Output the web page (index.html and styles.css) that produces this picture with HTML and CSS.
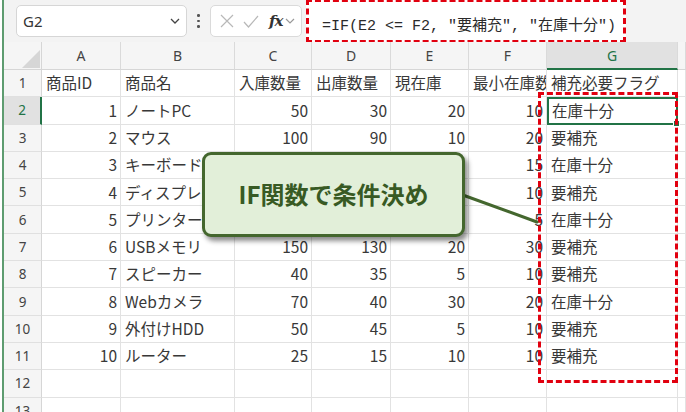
FILE: index.html
```html
<!DOCTYPE html>
<html lang="ja">
<head>
<meta charset="utf-8">
<title>在庫表</title>
<link rel="stylesheet" href="styles.css">
</head>
<body>
<div class="app">
  <div class="toolbar">
    <div class="namebox">
      <span class="name">G2</span>
      <svg class="chev" width="10" height="6" viewBox="0 0 10 6"><path d="M1 1 L5 5 L9 1" fill="none" stroke="#444" stroke-width="1.3"/></svg>
    </div>
    <div class="dots"><span></span><span></span><span></span></div>
    <div class="fxbox">
      <svg width="14" height="14" viewBox="0 0 14 14"><path d="M1 1 L13 13 M13 1 L1 13" stroke="#b8b8b8" stroke-width="1.2" fill="none"/></svg>
      <svg width="16" height="13" viewBox="0 0 16 13"><path d="M1 7 L5.5 12 L15 1" stroke="#b8b8b8" stroke-width="1.2" fill="none"/></svg>
      <span class="fx">fx</span>
      <svg width="10" height="6" viewBox="0 0 10 6"><path d="M1 1 L5 5 L9 1" fill="none" stroke="#999" stroke-width="1.2"/></svg>
    </div>
    <div class="formula">=IF(E2 &lt;= F2, "要補充", "在庫十分")</div>
  </div>

  <div class="sheet">
    <div class="corner"><svg width="22" height="20" viewBox="0 0 22 20"><path d="M21 1 L21 19 L3 19 Z" fill="#d6d6d6"/></svg></div>
    <div class="ch">A</div><div class="ch">B</div><div class="ch">C</div><div class="ch">D</div><div class="ch">E</div><div class="ch">F</div><div class="ch ch-sel">G</div><div class="ch"></div>

    <div class="rh">1</div><div class="c">商品ID</div><div class="c">商品名</div><div class="c">入庫数量</div><div class="c">出庫数量</div><div class="c">現在庫</div><div class="c">最小在庫数</div><div class="c">補充必要フラグ</div><div class="c"></div>

    <div class="rh rh-sel">2</div><div class="c n">1</div><div class="c">ノートPC</div><div class="c n">50</div><div class="c n">30</div><div class="c n">20</div><div class="c n">10</div><div class="c sel">在庫十分</div><div class="c"></div>

    <div class="rh">3</div><div class="c n">2</div><div class="c">マウス</div><div class="c n">100</div><div class="c n">90</div><div class="c n">10</div><div class="c n">20</div><div class="c">要補充</div><div class="c"></div>

    <div class="rh">4</div><div class="c n">3</div><div class="c">キーボード</div><div class="c n">80</div><div class="c n">50</div><div class="c n">30</div><div class="c n">15</div><div class="c">在庫十分</div><div class="c"></div>

    <div class="rh">5</div><div class="c n">4</div><div class="c">ディスプレイ</div><div class="c n">30</div><div class="c n">25</div><div class="c n">5</div><div class="c n">10</div><div class="c">要補充</div><div class="c"></div>

    <div class="rh">6</div><div class="c n">5</div><div class="c">プリンター</div><div class="c n">20</div><div class="c n">10</div><div class="c n">10</div><div class="c n">5</div><div class="c">在庫十分</div><div class="c"></div>

    <div class="rh">7</div><div class="c n">6</div><div class="c">USBメモリ</div><div class="c n">150</div><div class="c n">130</div><div class="c n">20</div><div class="c n">30</div><div class="c">要補充</div><div class="c"></div>

    <div class="rh">8</div><div class="c n">7</div><div class="c">スピーカー</div><div class="c n">40</div><div class="c n">35</div><div class="c n">5</div><div class="c n">10</div><div class="c">要補充</div><div class="c"></div>

    <div class="rh">9</div><div class="c n">8</div><div class="c">Webカメラ</div><div class="c n">70</div><div class="c n">40</div><div class="c n">30</div><div class="c n">20</div><div class="c">在庫十分</div><div class="c"></div>

    <div class="rh">10</div><div class="c n">9</div><div class="c">外付けHDD</div><div class="c n">50</div><div class="c n">45</div><div class="c n">5</div><div class="c n">10</div><div class="c">要補充</div><div class="c"></div>

    <div class="rh">11</div><div class="c n">10</div><div class="c">ルーター</div><div class="c n">25</div><div class="c n">15</div><div class="c n">10</div><div class="c n">10</div><div class="c">要補充</div><div class="c"></div>

    <div class="rh">12</div><div class="c"></div><div class="c"></div><div class="c"></div><div class="c"></div><div class="c"></div><div class="c"></div><div class="c"></div><div class="c"></div>

    <div class="rh">13</div><div class="c"></div><div class="c"></div><div class="c"></div><div class="c"></div><div class="c"></div><div class="c"></div><div class="c"></div><div class="c"></div>
  </div>

  <div class="col-mark"></div>
  <svg class="pointer" width="686" height="412" viewBox="0 0 686 412"><line x1="460" y1="194" x2="537" y2="222" stroke="#44672e" stroke-width="3" stroke-linecap="round"/></svg>
  <div class="callout">IF関数で条件決め</div>
</div>
</body>
</html>
```

FILE: styles.css
```css
* { box-sizing: border-box; }
html, body { margin: 0; padding: 0; }
body {
  width: 686px;
  height: 412px;
  overflow: hidden;
  background: #ffffff;
  font-family: "Noto Sans CJK JP", "Noto Sans", sans-serif;
  color: #333;
}
.app {
  position: relative;
  margin-left: 2px;
  border-left: 2px solid #5e9c70;
  height: 412px;
  background: #ffffff;
}
.toolbar {
  height: 42px;
  background: #f3f3f3;
  display: flex;
  align-items: flex-start;
  padding-top: 5px;
}
.namebox {
  margin-left: 12px;
  width: 171px;
  height: 32px;
  background: #fff;
  border: 1px solid #d6d6d6;
  border-radius: 5px;
  display: flex;
  align-items: center;
  justify-content: space-between;
  padding: 0 6px 0 6px;
}
.name {
  font-family: "Noto Sans", "Open Sans", sans-serif;
  font-size: 15px;
  color: #333;
}
.dots {
  width: 23px;
  height: 32px;
  display: flex;
  flex-direction: column;
  align-items: center;
  justify-content: center;
  gap: 3px;
}
.dots span {
  width: 2.5px;
  height: 2.5px;
  background: #555;
  border-radius: 50%;
}
.fxbox {
  width: 92px;
  height: 32px;
  background: #fff;
  border: 1px solid #dadada;
  border-radius: 5px;
  display: flex;
  align-items: center;
  padding-left: 9px;
  gap: 9px;
}
.fx {
  font-family: "DejaVu Serif", "Liberation Serif", serif;
  font-style: italic;
  font-weight: bold;
  font-size: 15px;
  color: #333;
  margin-left: 1px;
  margin-right: -6px;
  letter-spacing: -1px;
}
.formula {
  margin-left: 4px;
  margin-top: -6px;
  width: 320px;
  height: 44px;
  background: #fff;
  border: 3px dashed #e1000f;
  display: flex;
  align-items: center;
  padding: 6px 0 0 13px;
  font-family: "Liberation Mono", "Noto Sans CJK JP", monospace;
  font-size: 15px;
  color: #2a2a2a;
  white-space: nowrap;
}
.sheet {
  display: grid;
  grid-template-columns: 38px 79px 114px 77px 79px 78px 78px 131px 8px;
  grid-template-rows: 28px repeat(13, 27.3px);
}
.corner {
  background: #f5f5f5;
  border-right: 1px solid #d6d6d6;
  border-bottom: 1px solid #d6d6d6;
  display: flex;
  align-items: flex-end;
  justify-content: flex-end;
}
.ch {
  background: #f5f5f5;
  border-right: 1px solid #dadada;
  border-bottom: 1px solid #d6d6d6;
  display: flex;
  align-items: center;
  justify-content: center;
  font-family: "Noto Sans", "Open Sans", sans-serif;
  font-size: 14px;
  color: #444;
}
.ch-sel {
  background: #e1e1e1;
  color: #217346;
  border-bottom: 2px solid #217346;
}
.rh {
  background: #f5f5f5;
  border-right: 1px solid #d6d6d6;
  border-bottom: 1px solid #e0e0e0;
  display: flex;
  align-items: center;
  justify-content: center;
  font-family: "Noto Sans", "Open Sans", sans-serif;
  font-size: 13.5px;
  color: #444;
}
.rh-sel {
  background: #e1e1e1;
  color: #217346;
  border-right: 2px solid #217346;
}
.c {
  border-right: 1px solid #e2e2e2;
  border-bottom: 1px solid #e2e2e2;
  display: flex;
  align-items: center;
  padding: 0 3px 0 4px;
  font-size: 15.5px;
  line-height: 1;
  white-space: nowrap;
  overflow: hidden;
  color: #383838;
}
.n { justify-content: flex-end; }
.sel {
  position: relative;
  overflow: visible;
  outline: 2px solid #217346;
  outline-offset: -2px;
  padding-left: 5px;
}
.sel::after {
  content: "";
  position: absolute;
  right: -3px;
  bottom: -3px;
  width: 5px;
  height: 5px;
  background: #217346;
  border: 1px solid #fff;
}
.col-mark {
  position: absolute;
  left: 534px;
  top: 92px;
  width: 140px;
  height: 291px;
  border: 3px dashed #e1000f;
  pointer-events: none;
}
.pointer {
  position: absolute;
  left: -4px;
  top: 0;
}
.callout {
  position: absolute;
  left: 198px;
  top: 152px;
  width: 263px;
  height: 85px;
  background: #e2efd9;
  border: 3px solid #44672e;
  border-radius: 9px;
  box-shadow: 3px 4px 5px rgba(0, 0, 0, 0.45);
  display: flex;
  align-items: center;
  justify-content: center;
  font-family: "Noto Sans CJK JP", sans-serif;
  font-weight: 700;
  font-size: 24px;
  color: #385a24;
  padding-bottom: 3px;
}
```
